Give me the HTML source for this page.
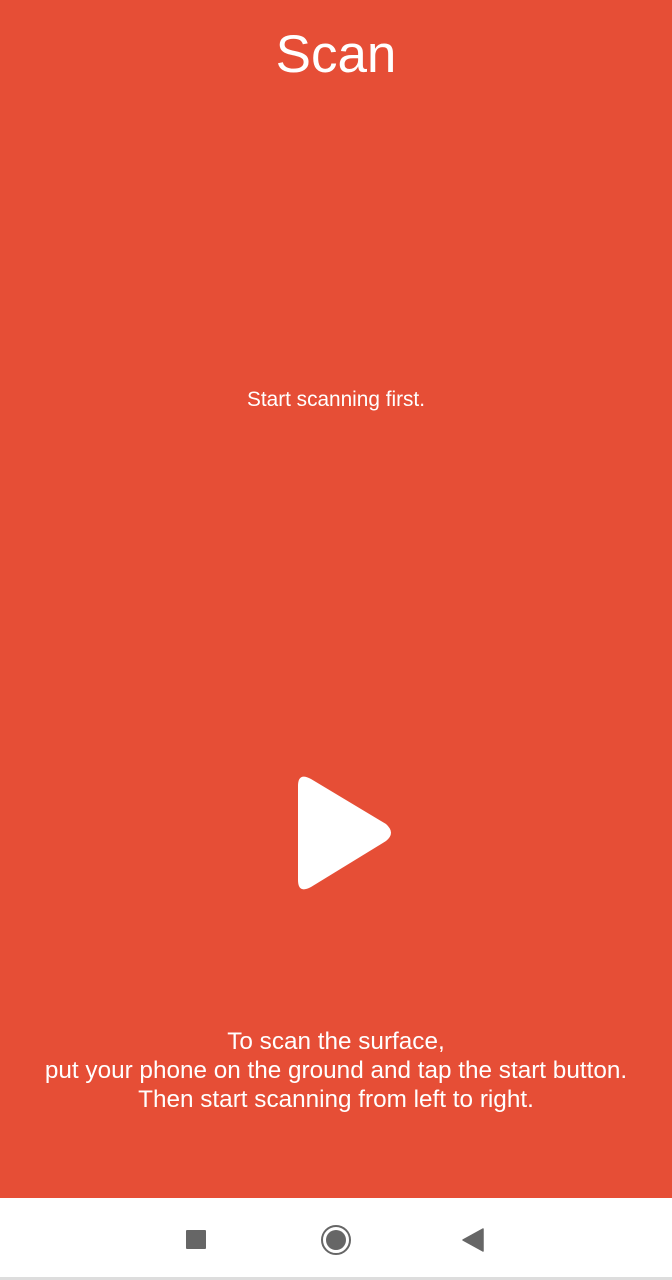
<!DOCTYPE html>
<html><head><style>
html,body{margin:0;padding:0;}
body{width:672px;height:1280px;position:relative;background:#fff;font-family:"Liberation Sans",sans-serif;overflow:hidden;}
.red{position:absolute;left:0;top:0;width:672px;height:1198px;background:#E64E36;}
.t{position:absolute;left:0;width:672px;text-align:center;color:#fff;white-space:nowrap;}
</style></head><body>
<div class="red"></div>
<div class="t" style="top:25px;font-size:53px;line-height:60px;">Scan</div>
<div class="t" style="top:388px;font-size:20.8px;line-height:24px;">Start scanning first.</div>
<svg style="position:absolute;left:0;top:0" width="672" height="1280">
<path d="M298 786 Q298 772 311 779 L386 824 Q396 833 386 841 L311 887 Q298 894 298 880 Z" fill="#fff"/>
<rect x="186" y="1230" width="20" height="19" rx="1" fill="#666"/>
<circle cx="336" cy="1240" r="14" fill="none" stroke="#666" stroke-width="2"/>
<circle cx="336" cy="1240" r="10" fill="#666"/>
<path d="M463 1240 L483 1229 L483 1251 Z" fill="#666" stroke="#666" stroke-width="1.5" stroke-linejoin="round"/>
<rect x="0" y="1277" width="672" height="3" fill="#ddd"/>
</svg>
<div class="t" style="top:1027px;font-size:24.3px;line-height:29px;">To scan the surface,<br>put your phone on the ground and tap the start button.<br>Then start scanning from left to right.</div>
</body></html>
